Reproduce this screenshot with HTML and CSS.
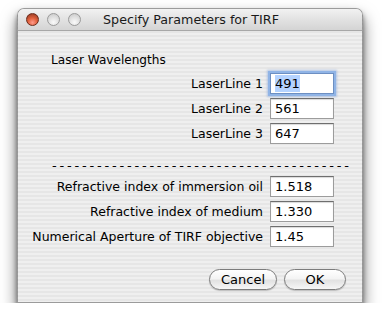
FILE: index.html
```html
<!DOCTYPE html>
<html lang="en">
<head>
    <meta charset="UTF-8">
    <title>Specify Parameters for TIRF</title>
    <link rel="stylesheet" href="styles.css">
</head>
<body>
    <div class="window">
        <div class="titlebar">
            <div class="lights">
                <span class="light close"></span>
                <span class="light"></span>
                <span class="light"></span>
            </div>
            <div class="title">Specify Parameters for TIRF</div>
        </div>

        <div class="content">
            <div class="heading">Laser Wavelengths</div>

            <div class="fields">
                <label class="field-label">LaserLine 1</label>
                <div class="field focused"><span class="selected">491</span></div>
                <label class="field-label">LaserLine 2</label>
                <div class="field">561</div>
                <label class="field-label">LaserLine 3</label>
                <div class="field">647</div>
            </div>

            <div class="divider">----------------------------------------</div>

            <div class="fields">
                <label class="field-label">Refractive index of immersion oil</label>
                <div class="field">1.518</div>
                <label class="field-label">Refractive index of medium</label>
                <div class="field">1.330</div>
                <label class="field-label">Numerical Aperture of TIRF objective</label>
                <div class="field">1.45</div>
            </div>

            <div class="buttons">
                <button class="btn cancel">Cancel</button>
                <button class="btn ok">OK</button>
            </div>
        </div>
    </div>
</body>
</html>
```

FILE: styles.css
```css
* {
    margin: 0;
    padding: 0;
    box-sizing: border-box;
}

body {
    background: #fff;
    font-family: "DejaVu Sans", sans-serif;
    font-size: 12px;
    color: #000;
}

.window {
    margin: 8px 0 0 17px;
    width: 346px;
    height: 295px;
    border: 1px solid rgba(0, 0, 0, 0.35);
    border-radius: 7px 7px 0 0;
    background: repeating-linear-gradient(180deg, #efefef 0, #efefef 2px, #e6e6e6 2px, #e6e6e6 4px);
    box-shadow: 0 4px 5px rgba(0, 0, 0, 0.45), 0 9px 16px rgba(0, 0, 0, 0.55);
    overflow: hidden;
    display: flex;
    flex-direction: column;
}

.titlebar {
    height: 22px;
    position: relative;
    display: flex;
    align-items: center;
    justify-content: center;
    background: linear-gradient(180deg, #f2f2f2 0%, #e2e2e2 50%, #d4d4d4 100%);
    border-bottom: 1px solid #a8a8a8;
}

.lights {
    position: absolute;
    left: 8px;
    top: 4px;
    display: flex;
    gap: 8px;
}

.light {
    width: 13px;
    height: 13px;
    border-radius: 50%;
    border: 1px solid #9a9a9a;
    background: radial-gradient(circle at 50% 75%, #fafafa 0%, #dedede 55%, #c4c4c4 100%);
}

.light.close {
    border-color: #6a2a1a;
    background: radial-gradient(circle at 50% 78%, #ff9a8a 0%, #e0603c 45%, #a8442a 80%, #7a2c1c 100%);
}

.title {
    font-size: 12.7px;
    color: #1a1a1a;
    padding-left: 2px;
}

.content {
    flex: 1;
    display: flex;
    flex-direction: column;
    padding: 21px 16px 0 0;
}

.heading {
    margin-left: 33px;
    line-height: 16px;
    font-size: 12.1px;
}

.fields {
    display: grid;
    grid-template-columns: 245px 64px;
    column-gap: 7px;
    row-gap: 4px;
    margin-top: 5px;
}

.field-label {
    text-align: right;
    line-height: 21px;
    font-size: 12.5px;
    white-space: nowrap;
}

.field {
    height: 21px;
    background: #fff;
    border: 1px solid #9c9c9c;
    border-top-color: #6e6e6e;
    box-shadow: inset 0 1px 1px rgba(0, 0, 0, 0.15);
    padding-left: 4px;
    line-height: 19px;
    font-size: 13px;
}

.field.focused {
    border-color: #6d8fc2;
    box-shadow: 0 0 0 2px #90b4e6, 0 0 2px 3px rgba(120, 160, 220, 0.5);
}

.selected {
    background: #b5d3ff;
    padding: 1px 0;
}

.divider {
    margin: 14px 0 0 34px;
    line-height: 16px;
    font-size: 13px;
    letter-spacing: 2.8px;
    white-space: nowrap;
    overflow: hidden;
    width: 300px;
}

.divider + .fields {
    margin-top: 2px;
}

.buttons {
    display: flex;
    justify-content: flex-end;
    gap: 7px;
    margin-top: 22px;
}

.btn {
    height: 21px;
    border: 1px solid #7c7c7c;
    border-radius: 11px;
    background: linear-gradient(180deg, #ffffff 0%, #f4f4f4 45%, #e2e2e2 55%, #f6f6f6 100%);
    box-shadow: 0 1px 1px rgba(0, 0, 0, 0.2);
    font-family: "DejaVu Sans", sans-serif;
    font-size: 13px;
    color: #000;
}

.btn.cancel {
    width: 68px;
}

.btn.ok {
    width: 62px;
}
```
